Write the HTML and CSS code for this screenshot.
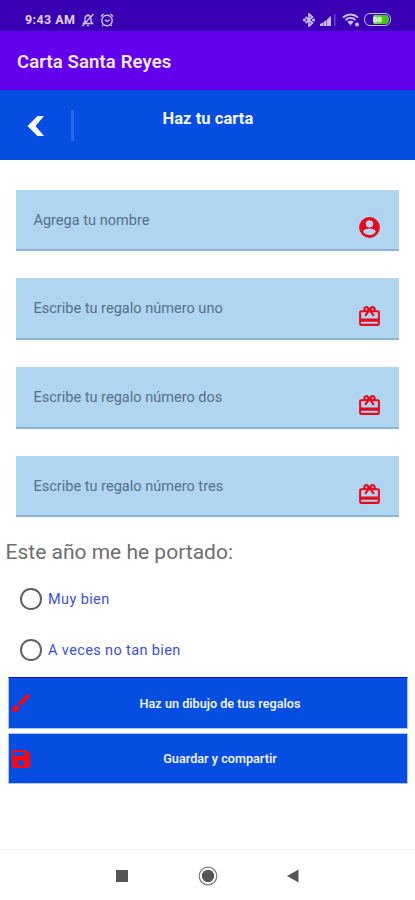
FILE: index.html
```html
<!DOCTYPE html>
<html lang="es">
<head>
<meta charset="utf-8">
<title>Carta Santa Reyes</title>
<link rel="stylesheet" href="styles.css">
</head>
<body>
<svg class="defs" aria-hidden="true">
  <symbol id="gift" viewBox="0 0 24 24"><path fill-rule="evenodd" d="M20 6h-2.180c.11-.31.18-.65.18-1a3 3 0 0 0-5.500-1.650L12 4.020l-.5-.68A3 3 0 0 0 6 5c0 .35.070.69.180 1H4c-1.110 0-1.990.89-1.990 2L2 19c0 1.110.89 2 2 2h16c1.110 0 2-.89 2-2V8c0-1.110-.89-2-2-2zM15 4a1 1 0 1 1 0 2 1 1 0 0 1 0-2zM9 4a1 1 0 1 1 0 2 1 1 0 0 1 0-2zM20 19H4v-2h16v2zm0-5H4V8h5.080L7 10.830 8.620 12 12 7.400 15.380 12 17 10.830 14.920 8H20v6z"/></symbol>
</svg>
<header>
  <div class="status">
    <span class="time">9:43 AM</span>
    <svg class="bell" viewBox="0 0 14 14"><path d="M2.500 10.500h9L10 8.500V5.500a3 3 0 0 0-6 0v3zM6 12.500h2M7 1v1.500M1.500 13 12.500 1"/></svg>
    <svg class="alarm" viewBox="0 0 14 14"><circle cx="7" cy="7.500" r="5.200"/><path d="M.8 3.500 3.500 1M10.500 1 13.200 3.500M4.800 6.700 7 8.500l2.600-1.700M3 12l-1 1M11 12l1 1"/></svg>
    <span class="grow"></span>
    <svg class="bt" viewBox="0 0 12 14"><path d="m2.500 4 7 6L6 13V1l3.500 3-7 6"/><circle cx="1.500" cy="7" r=".7"/><circle cx="10.500" cy="7" r=".7"/></svg>
    <svg class="signal" viewBox="0 0 16 12"><path d="M0 12v-2l3-1.500V12zM3.500 12V8l3-2v6zM7 12V5.500L11 2v10z"/><path class="dim" d="M14 0h1.500v12H14z"/></svg>
    <svg class="wifi" viewBox="0 0 18 14"><path class="line" d="M1 4.500c4.500-4 10.500-4 15 0M3.500 7c3-2.700 7-2.700 10 0M6 9.500c1.700-1.300 3.300-1.300 5 0"/><path d="m6.500 10 2-1.200 2 1.200-2 2.500z"/><circle cx="15" cy="11.500" r="2"/></svg>
    <span class="battery"><span class="charge">68</span></span>
  </div>
  <h1>Carta Santa Reyes</h1>
</header>
<nav class="toolbar">
  <svg class="back" viewBox="0 0 18 22"><path d="M10.500 1H17L8.500 11 17 21h-6.500L.5 11z"/></svg>
  <span class="divider"></span>
  <h2>Haz tu carta</h2>
</nav>
<main>
  <div class="fields">
    <div class="field"><span>Agrega tu nombre</span><svg viewBox="0 0 24 24"><path fill-rule="evenodd" d="M12 2a10 10 0 1 0 0 20 10 10 0 0 0 0-20zm0 3a3.500 3.500 0 1 1 0 7 3.500 3.500 0 0 1 0-7zm0 14.200c-2.500 0-4.710-1.280-6-3.220.03-1.990 4-3.080 6-3.080s5.970 1.090 6 3.080a7.200 7.200 0 0 1-6 3.220z"/></svg></div>
    <div class="field"><span>Escribe tu regalo número uno</span><svg class="gift"><use href="#gift"/></svg></div>
    <div class="field"><span>Escribe tu regalo número dos</span><svg class="gift"><use href="#gift"/></svg></div>
    <div class="field"><span>Escribe tu regalo número tres</span><svg class="gift"><use href="#gift"/></svg></div>
  </div>
  <p class="question">Este año me he portado:</p>
  <div class="option"><i></i><span>Muy bien</span></div>
  <div class="option"><i></i><span>A veces no tan bien</span></div>
  <div class="actions">
    <div class="button"><svg viewBox="0 0 24 24"><path d="M7 14c-1.660 0-3 1.340-3 3 0 1.310-1.160 2-2 2 .92 1.220 2.490 2 4 2a4 4 0 0 0 4-4c0-1.660-1.340-3-3-3zM20.710 4.630l-1.340-1.340a1 1 0 0 0-1.410 0L9 12.250 11.750 15l8.960-8.960a1 1 0 0 0 0-1.410z"/></svg><span>Haz un dibujo de tus regalos</span></div>
    <div class="button"><svg viewBox="0 0 24 24"><path d="M17 3H5a2 2 0 0 0-2 2v14a2 2 0 0 0 2 2h14a2 2 0 0 0 2-2V7zm-5 16a3 3 0 1 1 0-6 3 3 0 0 1 0 6zm3-10H5V5h10z"/></svg><span>Guardar y compartir</span></div>
  </div>
</main>
<footer>
  <svg viewBox="0 0 20 20"><path d="M4 4h12v12H4z"/></svg>
  <svg viewBox="0 0 20 20"><circle cx="10" cy="10" r="6.200"/><circle class="ring" cx="10" cy="10" r="8.800"/></svg>
  <svg viewBox="0 0 20 20"><path d="M15.500 3.500v13L4 10z"/></svg>
</footer>
</body>
</html>
```
FILE: styles.css
```css
* { box-sizing: border-box; }
body {
  margin: 0;
  width: 415px;
  height: 900px;
  display: flex;
  flex-direction: column;
  overflow: hidden;
  background: #fff;
  font-family: Roboto, sans-serif;
}
h1, h2, p { margin: 0; }
svg { display: block; flex: none; }
.defs { display: none; }
header { height: 90px; background: #6200ee; color: #f3eaff; }
.status {
  height: 31px;
  display: flex;
  align-items: center;
  padding: 8px 24px 0 25px;
  background: #3900b3;
  color: #ded5fb;
}
.status svg { fill: none; stroke: #c9bdf3; stroke-width: 1.4; }
.time { width: 56px; font-size: 12.5px; font-weight: 700; letter-spacing: .4px; white-space: nowrap; }
.bell, .alarm { width: 14px; height: 14px; }
.alarm { margin-left: 5px; }
.grow { flex: 1; }
.status .bt { width: 12px; height: 14px; margin-right: 5px; stroke-width: 1.7; }
.status .signal { width: 16px; height: 12px; margin-right: 6px; fill: #c9bdf3; stroke: none; }
.signal .dim { opacity: .35; }
.status .wifi { width: 18px; height: 14px; margin-right: 4px; fill: #c9bdf3; stroke: none; }
.wifi .line { fill: none; stroke: #c9bdf3; stroke-width: 1.9; }
.battery {
  width: 27px;
  height: 13px;
  padding: 1px;
  border: 1.5px solid #c9bdf3;
  border-radius: 6px;
  display: flex;
  justify-content: flex-end;
}
.charge {
  width: 16px;
  height: 9px;
  border-radius: 2px 4px 4px 2px;
  background: linear-gradient(90deg, #9bd79b, #43c718 60%);
  color: #f2fff0;
  font-size: 8px;
  font-weight: 700;
  line-height: 9px;
}
h1 { padding: 19px 17px 0; font-size: 18.5px; font-weight: 600; line-height: 24px; letter-spacing: .12px; }
.toolbar {
  height: 70px;
  display: flex;
  background: #064de2;
  color: #f3f6ff;
}
.back { width: 18px; height: 22px; margin: 25px 0 0 27px; fill: #fff; }
.divider { width: 3px; height: 31px; margin: 20px 0 0 26px; background: #2c69e8; }
h2 { margin: 19px 0 0 88.500px; font-size: 16.5px; line-height: 20px; font-weight: 700; letter-spacing: .05px; }
.fields { display: grid; gap: 27.3px; padding: 29.5px 16px 0 16.400px; }
.field {
  height: 61.5px;
  display: flex;
  justify-content: space-between;
  padding: 0 17px;
  border-bottom: 2px solid #8db5d1;
  background: #afd5f0;
  color: #55708a;
  font-size: 14.55px;
}
.field span { line-height: 62px; }
.field svg { width: 25px; height: 25px; margin-top: 25px; fill: #e9091c; }
.field .gift { margin-top: 26px; }
.question { padding: 22px 0 0 5.500px; font-size: 21px; line-height: 26px; color: #6e6e6e; }
.option { height: 51px; display: flex; align-items: center; padding-left: 20px; color: #3b50d8; font-size: 14.5px; letter-spacing: .38px; }
.question + .option { margin-top: 8px; }
.option i { width: 21.500px; height: 21.500px; margin-right: 6.5px; border: 2px solid #606060; border-radius: 50%; }
.option span { padding-top: 2px; }
.actions { display: grid; gap: 4px; padding: 2px 7px 0 8px; }
.button {
  height: 51.5px;
  display: grid;
  grid-template-columns: 24px 1fr;
  align-items: center;
  border: 1px solid #b4c2f3;
  background: #064de2;
  color: #edf3ff;
  font-size: 12.65px;
  font-weight: 600;
  text-align: center;
}
.button:first-child { border-top-color: #1419c0; }
.button svg { width: 24px; height: 24px; fill: #fb0712; }
footer {
  height: 51px;
  margin-top: auto;
  display: grid;
  grid-template-columns: repeat(3, 20px);
  justify-content: center;
  gap: 65.5px;
  padding-top: 15.5px;
  border-top: 1px solid #f0f0f0;
}
footer svg { width: 20px; height: 20px; fill: #555; }
footer .ring { fill: none; stroke: #777; stroke-width: 1.2; }
```
